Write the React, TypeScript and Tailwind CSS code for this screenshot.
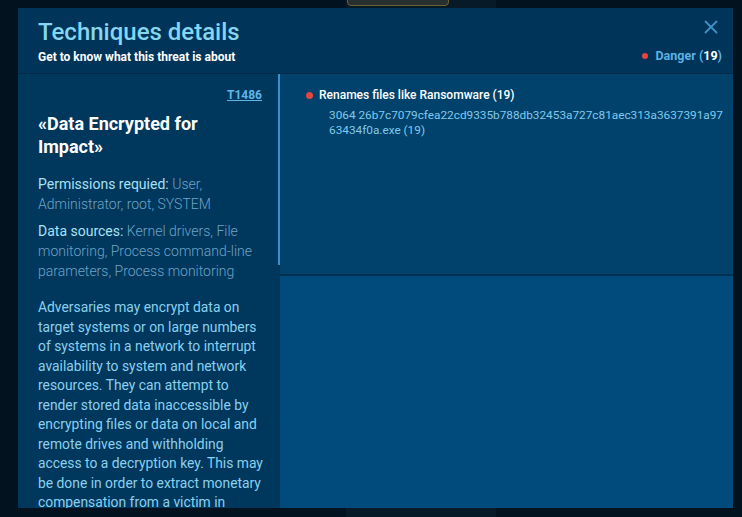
import { X } from "lucide-react";

const hash = "3064 26b7c7079cfea22cd9335b788db32453a727c81aec313a3637391a9763434f0a.exe (19)";

export default function App() {
  return (
    <div
      className="relative w-[742px] h-[517px] overflow-hidden bg-[#02131f]"
      style={{ fontFamily: "Roboto, 'Noto Sans', sans-serif" }}
    >
      {/* page content beneath the overlay */}
      <div className="absolute left-[346px] top-0 w-[150px] h-full bg-[#061a28]" />
      <div className="absolute left-[347px] -top-[14px] w-[102px] h-[20px] rounded-sm border border-[#6e6232] bg-[#27302f]" />

      <div className="relative pt-2 pl-[18px]">
        <div className="w-[715px] h-[500px] flex flex-col bg-[#003459]">
          {/* header */}
          <div className="h-[66px] shrink-0 flex justify-between border-b border-[#002a48] pl-5 pr-[11px]">
            <div className="pt-[10px]">
              <h1 className="text-[24px] leading-[28px] font-medium text-[#86d6f0]">Techniques details</h1>
              <p className="mt-[4px] text-[12px] leading-[14px] font-bold text-white">
                Get to know what this threat is about
              </p>
            </div>
            <div className="flex flex-col items-end pt-[8px]">
              <X size={22} strokeWidth={2} className="text-[#3d8fc7]" />
              <div className="mt-[9px] flex items-center text-[12.5px] font-bold text-[#5cb2e3]">
                <span className="w-[6px] h-[6px] rounded-full bg-[#e5453f] mr-[7px]" />
                Danger&nbsp;(<span className="text-white">19</span>)
              </div>
            </div>
          </div>

          <div className="flex flex-1 min-h-0">
            {/* left panel */}
            <div className="w-[262px] shrink-0 flex">
              <div className="w-[260px] overflow-hidden pl-5 pr-2 pt-[14px] bg-[#00375d]">
                <div className="flex justify-end pr-2">
                  <a className="text-[12px] leading-[14px] font-bold text-[#5cb6e8] underline">T1486</a>
                </div>
                <h2 className="mt-[10px] pr-2 text-[18px] leading-[23px] font-bold text-white">
                  «Data Encrypted for Impact»
                </h2>
                <p className="mt-[16px] pr-2 text-[14px] leading-[20px] font-light text-[#6fa3c4]">
                  <span className="font-normal text-[#a9e1f6]">Permissions requied: </span>
                  User, Administrator, root, SYSTEM
                </p>
                <p className="mt-[7px] pr-2 text-[14px] leading-[20px] font-light text-[#6fa3c4]">
                  <span className="font-normal text-[#a9e1f6]">Data sources: </span>
                  Kernel drivers, File monitoring, Process command-line parameters, Process monitoring
                </p>
                <p className="mt-[17px] text-[13.85px] leading-[19.5px] text-[#8bd0ee]">
                  Adversaries may encrypt data on target systems or on large numbers of systems in a network to
                  interrupt availability to system and network resources. They can attempt to render stored data
                  inaccessible by encrypting files or data on local and remote drives and withholding access to a
                  decryption key. This may be done in order to extract monetary compensation from a victim in
                  exchange for decryption or a decryption key.
                </p>
              </div>
              <div className="w-[2px] h-[191px] bg-[#3a8fcb]" />
            </div>

            {/* right panel */}
            <div className="flex-1 flex flex-col">
              <div className="h-[202px] shrink-0 bg-[#00426b] border-b-2 border-[#00304f] pl-[26px] pr-[4px] pt-[14px]">
                <div className="flex items-center text-[12px] leading-[14px] font-medium text-white">
                  <span className="w-[7px] h-[7px] rounded-full bg-[#e5453f] mr-[6px]" />
                  Renames files like Ransomware (19)
                </div>
                <p className="mt-[6px] ml-[23px] text-[11.8px] leading-[15px] text-[#80c9ec] break-all">{hash}</p>
              </div>
              <div className="flex-1 bg-[#004b7b]" />
            </div>
          </div>
        </div>
      </div>
    </div>
  );
}
